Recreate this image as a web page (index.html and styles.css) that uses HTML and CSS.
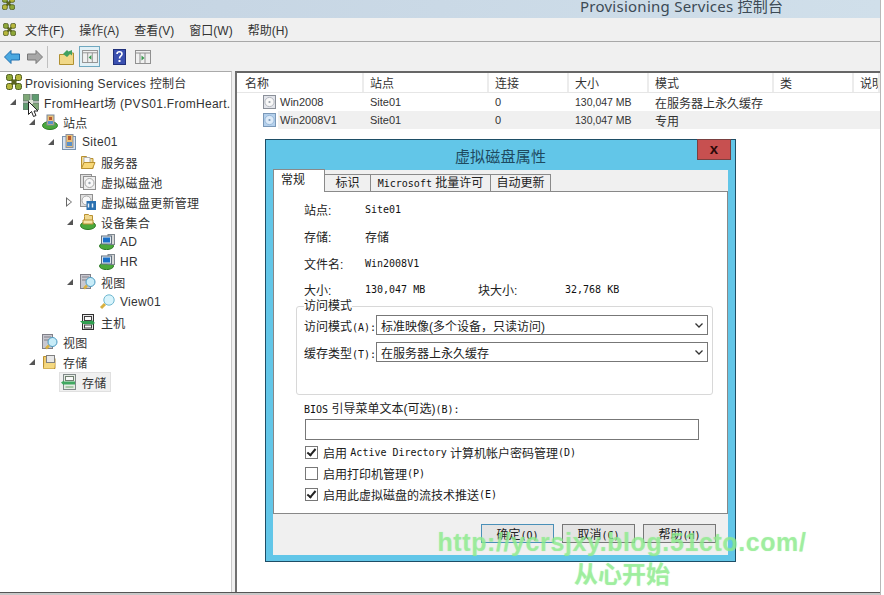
FILE: index.html
```html
<!DOCTYPE html>
<html lang="zh-CN">
<head>
    <meta charset="UTF-8">
    <title>Provisioning Services 控制台</title>
    <link rel="stylesheet" href="styles.css">
</head>
<body>
<svg class="defs" width="0" height="0">
    <defs>
        <symbol id="logo" viewBox="0 0 16 16">
            <path d="M4 4l8 8M12 4l-8 8" stroke="#5a6420" stroke-width="3"/>
            <rect x="0.500" y="0.500" width="6" height="6" rx="2" fill="#8fa838" stroke="#4d5a20"/>
            <rect x="9.500" y="0.500" width="6" height="6" rx="2" fill="#b8b83c" stroke="#4d5a20"/>
            <rect x="0.500" y="9.500" width="6" height="6" rx="2" fill="#b8b83c" stroke="#4d5a20"/>
            <rect x="9.500" y="9.500" width="6" height="6" rx="2" fill="#8fa838" stroke="#4d5a20"/>
        </symbol>
        <symbol id="farm" viewBox="0 0 16 16">
            <rect x="0" y="0" width="7" height="7" fill="#7fa878" stroke="#6b7b70"/>
            <rect x="9" y="0" width="7" height="7" fill="#5f9c70" stroke="#6b7b70"/>
            <rect x="0" y="9" width="7" height="7" fill="#5f9c70" stroke="#6b7b70"/>
            <rect x="9" y="9" width="7" height="7" fill="#7fa878" stroke="#6b7b70"/>
            <path d="M6 6h4v4H6z" fill="#dfe8d8"/>
        </symbol>
        <symbol id="sites" viewBox="0 0 16 16">
            <ellipse cx="8" cy="11.500" rx="7.500" ry="4" fill="#4aa83c" stroke="#2c7a26"/>
            <rect x="5" y="1" width="7" height="10" fill="#e8c078" stroke="#7a8aa0"/>
            <path d="M7 3h3v3H7z" fill="#b85a30"/>
            <path d="M6 7h5v3H6z" fill="#5a90c8"/>
        </symbol>
        <symbol id="site" viewBox="0 0 16 16">
            <rect x="1.500" y="2.500" width="13" height="13" fill="#d8e4f0" stroke="#7a94b0"/>
            <rect x="5" y="0.500" width="7" height="13" fill="#e8c078" stroke="#8a90a0"/>
            <path d="M7 2h3v4H7z" fill="#b85a30"/>
            <path d="M6 8h5v4H6z" fill="#5a90c8"/>
        </symbol>
        <symbol id="folder" viewBox="0 0 16 16">
            <path d="M1.500 14.500v-12h5l1.500 2h5v10z" fill="#f4dc90" stroke="#b89030"/>
            <path d="M4 3.500h6v5H4z" fill="#f8f8f8" stroke="#b0b0b0"/>
            <path d="M1.500 14.500l2.500-6h11l-2.500 6z" fill="#f8d878" stroke="#b89030"/>
        </symbol>
        <symbol id="store" viewBox="0 0 16 16">
            <path d="M1.500 14.500v-12h5l1.500 2h5v10z" fill="#f0cc70" stroke="#b89030"/>
            <rect x="4.500" y="1.500" width="8" height="7" fill="#e8e8e8" stroke="#808080"/>
            <path d="M3 9h10l-1 5.500H1.500z" fill="#f4d880"/>
        </symbol>
        <symbol id="pool" viewBox="0 0 16 16">
            <rect x="0.500" y="0.500" width="11" height="13" fill="#e0e0e0" stroke="#909090"/>
            <rect x="3.500" y="2.500" width="12" height="13" fill="#eeeeee" stroke="#909090"/>
            <circle cx="9.500" cy="9" r="4.500" fill="#f8f8f8" stroke="#a8a8a8"/>
            <circle cx="9.500" cy="9" r="1.200" fill="#a0a8b0"/>
        </symbol>
        <symbol id="update" viewBox="0 0 16 16">
            <rect x="0.500" y="0.500" width="12" height="12" fill="#e0e0e0" stroke="#909090"/>
            <circle cx="6.500" cy="6.500" r="4.500" fill="#f8f8f8" stroke="#a8a8a8"/>
            <rect x="6.500" y="7" width="9.500" height="9" fill="#2a70b0"/>
            <path d="M8.500 9.500v4M12.500 9.500v4" stroke="#e8f0f8" stroke-width="1.500"/>
        </symbol>
        <symbol id="devices" viewBox="0 0 16 16">
            <ellipse cx="8" cy="11.500" rx="7.500" ry="4" fill="#4aa83c" stroke="#2c7a26"/>
            <path d="M4.500 2.500v-2h4l1 1h3v8h-8z" fill="#f0d890" stroke="#b89030"/>
            <path d="M3 6h10v4H3z" fill="#f4e4a8" stroke="#b89030"/>
        </symbol>
        <symbol id="device" viewBox="0 0 16 16">
            <ellipse cx="7.500" cy="12" rx="7" ry="3.600" fill="#4aa83c" stroke="#2c7a26"/>
            <rect x="9" y="0.500" width="6.500" height="10" fill="#d8d8d8" stroke="#808890"/>
            <rect x="2.500" y="2" width="10" height="8" fill="#e0e8f0" stroke="#607080"/>
            <rect x="4" y="3.500" width="7" height="5" fill="#1a70c8"/>
        </symbol>
        <symbol id="view" viewBox="0 0 16 16">
            <rect x="0.500" y="0.500" width="10" height="14" fill="#c8c8d0" stroke="#808088"/>
            <path d="M2 3h7M2 6h5" stroke="#808088"/>
            <circle cx="10.500" cy="8" r="4.500" fill="#c8ecf8" stroke="#4898c0"/>
            <path d="M7 11.500l-3 3" stroke="#d8b040" stroke-width="2.500"/>
        </symbol>
        <symbol id="lens" viewBox="0 0 16 16">
            <circle cx="10" cy="6" r="5.200" fill="#d8f4fc" stroke="#70b8d0"/>
            <path d="M6 10l-4 4" stroke="#d8b040" stroke-width="3"/>
        </symbol>
        <symbol id="host" viewBox="0 0 16 16">
            <rect x="2.500" y="0.500" width="11" height="15" fill="#e8e8e8" stroke="#303030"/>
            <rect x="4.500" y="2.500" width="7" height="4" fill="#f8f8f8" stroke="#404040"/>
            <rect x="4.500" y="11" width="7" height="3" fill="#f8f8f8" stroke="#404040"/>
            <path d="M0 7h11l1-1 3 3-3 2-1-1H3z" fill="#30a050"/>
        </symbol>
        <symbol id="storage" viewBox="0 0 16 16">
            <rect x="2.500" y="0.500" width="12" height="15" fill="#e4ece4" stroke="#808888"/>
            <rect x="4.500" y="2.500" width="8" height="4" fill="#f8f8f8" stroke="#708070"/>
            <path d="M0 8.500l3-2v1h11v3H3v1z" fill="#40a860"/>
            <rect x="4.500" y="12" width="8" height="2" fill="#a8c8a8"/>
        </symbol>
        <symbol id="disk" viewBox="0 0 13 14">
            <rect x="0.500" y="0.500" width="12" height="13" fill="#e2e4ea" stroke="#8a8f98"/>
            <circle cx="6.500" cy="7" r="4.600" fill="#f8f8f8" stroke="#b4b8c0"/>
            <circle cx="6.500" cy="7" r="1.100" fill="#98a0a8"/>
        </symbol>
        <symbol id="disk-sel" viewBox="0 0 13 14">
            <rect x="0.500" y="0.500" width="12" height="13" fill="#b4d0ec" stroke="#7a98b8"/>
            <circle cx="6.500" cy="7" r="4.600" fill="#dceaf8" stroke="#98b8d8"/>
            <circle cx="6.500" cy="7" r="1.100" fill="#7a98b8"/>
        </symbol>
    </defs>
</svg>

<div class="console">
    <header class="titlebar">
        <svg class="title-logo"><use href="#logo"/></svg>
        <span>Provisioning Services 控制台</span>
    </header>

    <nav class="menubar">
        <svg class="menu-logo"><use href="#logo"/></svg>
        <span>文件(F)</span>
        <span>操作(A)</span>
        <span>查看(V)</span>
        <span>窗口(W)</span>
        <span>帮助(H)</span>
    </nav>

    <div class="toolbar">
        <svg class="tool tool-back" viewBox="0 0 16 14"><path d="M0.500 7L7 0.500V4h8.500v6H7v3.500z" fill="#4aa8e0" stroke="#2070b0"/></svg>
        <svg class="tool tool-next" viewBox="0 0 16 14"><path d="M15.500 7L9 0.500V4H0.500v6H9v3.500z" fill="#a8a8a8" stroke="#787878"/></svg>
        <i class="tool-sep"></i>
        <svg class="tool tool-up" viewBox="0 0 15 16"><path d="M0.500 15.500v-10h5l1-1.500h8v11.500z" fill="#f0d888" stroke="#b09030"/><path d="M4 5l4-4 1.500 1.500L13 1v5.500L11 5 8 8z" fill="#40a060"/></svg>
        <div class="tool-active">
            <svg viewBox="0 0 17 14"><rect x="0.500" y="0.500" width="16" height="13" fill="#f0f0f0" stroke="#909090"/><path d="M0.500 3h16M6 3v11M11 3v11" stroke="#909090"/><path d="M10 5.500v5l-3-2.500z" fill="#3a9a50"/></svg>
        </div>
        <svg class="tool tool-help" viewBox="0 0 13 16"><rect x="0.500" y="0.500" width="12" height="15" fill="#3a50b0" stroke="#20307a"/><path d="M4 5c0-3 5-3 5 0 0 2-2.500 2-2.500 4.500" fill="none" stroke="#fff" stroke-width="1.600"/><rect x="5.500" y="11" width="2" height="2" fill="#fff"/></svg>
        <svg class="tool tool-pane" viewBox="0 0 16 14"><rect x="0.500" y="0.500" width="15" height="13" fill="#f0f0f0" stroke="#909090"/><path d="M0.500 3h15M5 3v11M10 3v11" stroke="#909090"/><path d="M6.500 5.500v5l3-2.500z" fill="#3a9a50"/></svg>
    </div>

    <div class="panes">
        <aside class="tree">
            <div class="node lv0"><svg class="ico"><use href="#logo"/></svg>Provisioning Services 控制台</div>
            <div class="node lv1"><i class="open"></i><svg class="ico"><use href="#farm"/></svg>FromHeart场 (PVS01.FromHeart.</div>
            <div class="node lv2"><i class="open"></i><svg class="ico"><use href="#sites"/></svg>站点</div>
            <div class="node lv3"><i class="open"></i><svg class="ico"><use href="#site"/></svg>Site01</div>
            <div class="node lv4"><svg class="ico"><use href="#folder"/></svg>服务器</div>
            <div class="node lv4"><svg class="ico"><use href="#pool"/></svg>虚拟磁盘池</div>
            <div class="node lv4"><i class="shut"></i><svg class="ico"><use href="#update"/></svg>虚拟磁盘更新管理</div>
            <div class="node lv4"><i class="open"></i><svg class="ico"><use href="#devices"/></svg>设备集合</div>
            <div class="node lv5"><svg class="ico"><use href="#device"/></svg>AD</div>
            <div class="node lv5"><svg class="ico"><use href="#device"/></svg>HR</div>
            <div class="node lv4"><i class="open"></i><svg class="ico"><use href="#view"/></svg>视图</div>
            <div class="node lv5"><svg class="ico"><use href="#lens"/></svg>View01</div>
            <div class="node lv4"><svg class="ico"><use href="#host"/></svg>主机</div>
            <div class="node lv2"><svg class="ico"><use href="#view"/></svg>视图</div>
            <div class="node lv2"><i class="open"></i><svg class="ico"><use href="#store"/></svg>存储</div>
            <div class="node lv3"><span class="node-sel"><svg class="ico"><use href="#storage"/></svg>存储</span></div>
        </aside>

        <section class="list">
            <div class="list-head">
                <div class="col-name">名称</div><div>站点</div><div>连接</div><div>大小</div><div>模式</div><div>类</div><div>说明</div>
            </div>
            <div class="list-row">
                <div class="disk-cell"><svg class="disk"><use href="#disk"/></svg><span>Win2008</span></div>
                <div>Site01</div><div>0</div><div class="size">130,047 MB</div><div class="mode">在服务器上永久缓存</div><div></div><div></div>
            </div>
            <div class="list-row sel">
                <div class="disk-cell"><svg class="disk"><use href="#disk-sel"/></svg><span>Win2008V1</span></div>
                <div>Site01</div><div>0</div><div class="size">130,047 MB</div><div class="mode">专用</div><div></div><div></div>
            </div>
        </section>
    </div>
</div>

<div class="dialog">
    <div class="dlg-title">
        <span>虚拟磁盘属性</span>
        <button class="dlg-close">x</button>
    </div>
    <div class="tabs">
        <div class="tab tab-on">常规</div>
        <div class="tab tab-id">标识</div>
        <div class="tab tab-ms"><span class="en">Microsoft</span> 批量许可</div>
        <div class="tab tab-up">自动更新</div>
    </div>
    <div class="tab-body">
        <div class="field"><label>站点:</label><span class="en">Site01</span></div>
        <div class="field"><label>存储:</label><span>存储</span></div>
        <div class="field"><label>文件名:</label><span class="en">Win2008V1</span></div>
        <div class="field field-size">
            <label>大小:</label><span class="en val-size">130,047 MB</span>
            <label class="lbl-block">块大小:</label><span class="en">32,768 KB</span>
        </div>

        <fieldset class="group">
            <legend>访问模式</legend>
            <div class="combo-row">
                <label>访问模式<span class="en">(A):</span></label>
                <div class="combo">标准映像(多个设备，只读访问)<svg viewBox="0 0 8 5"><path d="M0.500 0.500L4 4l3.500-3.500" fill="none" stroke="#333" stroke-width="1.300"/></svg></div>
            </div>
            <div class="combo-row">
                <label>缓存类型<span class="en">(T):</span></label>
                <div class="combo">在服务器上永久缓存<svg viewBox="0 0 8 5"><path d="M0.500 0.500L4 4l3.500-3.500" fill="none" stroke="#333" stroke-width="1.300"/></svg></div>
            </div>
        </fieldset>

        <div class="bios-label"><span class="en">BIOS</span> 引导菜单文本(可选)<span class="en">(B):</span></div>
        <div class="bios-input"></div>

        <div class="check"><i class="box on"></i>启用 <span class="en">Active Directory</span> 计算机帐户密码管理<span class="en">(D)</span></div>
        <div class="check"><i class="box"></i>启用打印机管理<span class="en">(P)</span></div>
        <div class="check"><i class="box on"></i>启用此虚拟磁盘的流技术推送<span class="en">(E)</span></div>
    </div>
    <div class="dlg-foot">
        <button class="btn btn-main">确定<span class="en">(O)</span></button>
        <button class="btn">取消<span class="en">(C)</span></button>
        <button class="btn">帮助<span class="en">(H)</span></button>
    </div>
</div>

<svg class="cursor" viewBox="0 0 10 17"><path d="M0.500 0.500v13l3-3 2 5 2.500-1-2-4.500h4z" fill="#fff" stroke="#222"/></svg>

<div class="watermark">
    <div class="wm-url">http://ycrsjxy.blog.51cto.com/</div>
    <div class="wm-name">从心开始</div>
</div>
</body>
</html>
```

FILE: styles.css
```css
html, body {
    margin: 0;
    padding: 0;
    height: 100%;
    overflow: hidden;
}

body {
    font-family: "Liberation Sans", "Noto Sans CJK SC", sans-serif;
    font-size: 12px;
    color: #333;
    background: #fff;
    position: relative;
}

.defs {
    position: absolute;
}

.console {
    width: 881px;
    height: 595px;
    box-sizing: border-box;
    padding-bottom: 2px;
    border-right: 1px solid #b8b8b8;
    background: #c8c8c8;
    display: flex;
    flex-direction: column;
}

/* barre de titre */
.titlebar {
    height: 18px;
    flex: none;
    display: flex;
    align-items: flex-start;
    overflow: hidden;
    background: linear-gradient(90deg, #c4d3e2, #d0dfea);
    font-family: "Noto Sans", "Noto Sans CJK SC", sans-serif;
    font-size: 15px;
    letter-spacing: 0.25px;
    color: #3c4a55;
}

.titlebar span {
    line-height: 13px;
    margin-left: 565px;
    white-space: nowrap;
}

.title-logo {
    width: 13px;
    height: 13px;
    flex: none;
    margin: -3px 0 0 2px;
}

.menubar {
    height: 23px;
    flex: none;
    display: flex;
    align-items: center;
    gap: 15px;
    background: #f0f0f0;
    border-bottom: 1px solid #a8a8a8;
}

.menu-logo {
    width: 13px;
    height: 13px;
    margin-left: 3px;
    margin-right: -6px;
}

.toolbar {
    height: 29px;
    flex: none;
    display: flex;
    align-items: center;
    background: #f0f0f0;
}

.tool {
    flex: none;
}

.tool-back {
    width: 16px;
    height: 14px;
    margin-left: 4px;
}

.tool-next {
    width: 16px;
    height: 14px;
    margin-left: 7px;
}

.tool-sep {
    width: 1px;
    height: 22px;
    margin-left: 4px;
    background: #c0c0c0;
}

.tool-up {
    width: 15px;
    height: 16px;
    margin-left: 11px;
}

.tool-active {
    width: 21px;
    height: 21px;
    margin-left: 5px;
    box-sizing: border-box;
    border: 1px solid #6fa8c0;
    background: #e2f0f6;
    display: flex;
    align-items: center;
    justify-content: center;
}

.tool-active svg {
    width: 16px;
    height: 13px;
}

.tool-help {
    width: 13px;
    height: 16px;
    margin-left: 13px;
}

.tool-pane {
    width: 16px;
    height: 14px;
    margin-left: 9px;
}

.panes {
    flex: 1;
    display: flex;
    min-height: 0;
    background: #f0f0f0;
    border-bottom: 1px solid #555;
}

/* arbre */
.tree {
    width: 231px;
    flex: none;
    background: #fff;
    border-top: 1px solid #aaa;
    border-right: 1px solid #c8c8c8;
    overflow: hidden;
}

.node {
    height: 20px;
    display: flex;
    align-items: center;
    white-space: nowrap;
    letter-spacing: 0.3px;
}

.node i {
    width: 16px;
    height: 16px;
    margin-left: -16px;
    flex: none;
    position: relative;
}

.open::after {
    content: "";
    position: absolute;
    right: 7px;
    top: 5px;
    border-style: solid;
    border-width: 0 0 6px 6px;
    border-color: transparent transparent #555 transparent;
}

.shut::before,
.shut::after {
    content: "";
    position: absolute;
    border-style: solid;
    border-color: transparent;
}

.shut::before {
    right: 8px;
    top: 3px;
    border-width: 5px 0 5px 6px;
    border-left-color: #666;
}

.shut::after {
    right: 9px;
    top: 5px;
    border-width: 3px 0 3px 4px;
    border-left-color: #fff;
}

.ico {
    width: 16px;
    height: 16px;
    flex: none;
    margin-right: 5px;
}

.lv0 { padding-left: 6px; }
.lv0 .ico { margin-right: 3px; }
.lv1 { padding-left: 23px; }
.lv2 { padding-left: 42px; }
.lv3 { padding-left: 61px; }
.lv4 { padding-left: 80px; }
.lv5 { padding-left: 99px; }

.node-sel {
    display: flex;
    align-items: center;
    height: 18px;
    padding: 0 3px 0 1px;
    background: #f0f0f0;
    border: 1px solid #e0e0e0;
    margin-left: -2px;
}

/* liste */
.list {
    flex: 1;
    margin-left: 3px;
    background: #fff;
    border-top: 2px solid #666;
    border-left: 2px solid #707070;
    overflow: hidden;
}

.list-head,
.list-row {
    display: grid;
    grid-template-columns: 127px 125px 80px 80px 125px 80px 1fr;
    align-items: center;
}

.list-head {
    height: 19px;
    border-bottom: 1px solid #e6e6e6;
    white-space: nowrap;
}

.list-head div {
    padding: 3px 0 0 6px;
    line-height: 16px;
    border-right: 2px solid #ececec;
    overflow: hidden;
}

.list-head .col-name {
    padding-left: 8px;
}

.list-row {
    height: 18px;
    font-size: 11px;
}

.list-row > div {
    padding-left: 6px;
    white-space: nowrap;
    overflow: hidden;
}

.list-row.sel {
    background: linear-gradient(90deg, #fff 0, #fff 41px, #f0f0f0 41px);
}

.list-row > .disk-cell {
    padding-left: 26px;
    display: flex;
    align-items: center;
}

.disk {
    width: 13px;
    height: 14px;
    margin-right: 4px;
    flex: none;
}

.list-row .size {
    font-size: 10.5px;
}

.list-row .mode {
    font-size: 12px;
}

/* fenetre de dialogue */
.dialog {
    position: absolute;
    left: 265px;
    top: 139px;
    width: 471px;
    height: 423px;
    box-sizing: border-box;
    border: 1px solid #1e4e66;
    background: #62c6e8;
    padding: 0 7px 6px;
    display: flex;
    flex-direction: column;
    color: #222;
}

.dlg-title {
    height: 30px;
    flex: none;
    display: flex;
    align-items: center;
    justify-content: center;
    font-size: 15px;
    letter-spacing: 0.2px;
    color: #1e4a60;
    position: relative;
}

.dlg-close {
    position: absolute;
    right: -3px;
    top: -1px;
    width: 34px;
    height: 21px;
    padding: 0 0 3px;
    box-sizing: border-box;
    border: 1px solid #7a4040;
    background: #c75050;
    color: #2a0808;
    font: bold 15px "Liberation Sans", sans-serif;
}

.tabs {
    height: 21px;
    flex: none;
    display: flex;
    align-items: flex-end;
    background: #f0f0f0;
    border-bottom: 1px solid #888;
    position: relative;
}

.tab {
    height: 18px;
    box-sizing: border-box;
    margin-bottom: -1px;
    border: 1px solid #8a8a8a;
    border-left-width: 0;
    background: #f0f0f0;
    line-height: 17px;
    text-align: center;
    white-space: nowrap;
}

.tab-on {
    width: 52px;
    height: 23px;
    border-left-width: 1px;
    border-bottom: 0;
    background: #fff;
    line-height: 21px;
    padding-right: 12px;
    position: relative;
    z-index: 1;
}

.tab-id { width: 46px; }
.tab-ms { width: 120px; }
.tab-up { width: 60px; }

.en {
    font-family: "DejaVu Sans Mono", monospace;
    font-size: 10px;
    color: #111;
}

.tab-body {
    flex: 1;
    background: #fff;
    border-left: 1px solid #888;
    border-right: 1px solid #888;
    padding: 4px 15px 0 30px;
    min-height: 0;
}

.field {
    height: 27px;
    display: flex;
    align-items: center;
}

.field-size {
    height: 24px;
}

.field label {
    width: 61px;
    flex: none;
}

.field .val-size {
    width: 113px;
    flex: none;
}

.field .lbl-block {
    width: 87px;
}

.group {
    margin: -2px 0 0 -8px;
    padding: 0 4px 0 7px;
    width: 417px;
    height: 96px;
    box-sizing: border-box;
    border: 1px solid #d8d8d8;
    border-radius: 3px;
}

.group legend {
    padding: 0;
    line-height: 14px;
    background: #fff;
}

.combo-row {
    height: 20px;
    margin-bottom: 7px;
    display: flex;
    align-items: center;
}

.combo-row:first-of-type {
    margin-top: 2px;
}

.combo-row label {
    width: 72px;
    flex: none;
    white-space: nowrap;
}

.combo {
    flex: 1;
    height: 20px;
    box-sizing: border-box;
    border: 1px solid #777;
    padding: 0 4px;
    display: flex;
    align-items: center;
    justify-content: space-between;
}

.combo svg {
    width: 8px;
    height: 5px;
}

.bios-label {
    margin-top: 6px;
    height: 17px;
    line-height: 17px;
}

.bios-input {
    width: 394px;
    height: 21px;
    margin: 1px 0 2px 1px;
    box-sizing: border-box;
    border: 1px solid #777;
}

.check {
    height: 21px;
    margin-left: 1px;
    display: flex;
    align-items: center;
    white-space: pre;
}

.box {
    width: 13px;
    height: 13px;
    box-sizing: border-box;
    border: 1px solid #777;
    margin-right: 5px;
    flex: none;
    position: relative;
}

.box.on::after {
    content: "";
    position: absolute;
    left: 3px;
    top: 0;
    width: 3px;
    height: 7px;
    border: solid #222;
    border-width: 0 2px 2px 0;
    transform: rotate(40deg);
}

.dlg-foot {
    height: 42px;
    flex: none;
    box-sizing: border-box;
    background: #f0f0f0;
    border-top: 1px solid #888;
    padding: 10px 12px 0 0;
    display: flex;
    justify-content: flex-end;
    gap: 8px;
}

.btn {
    width: 73px;
    height: 19px;
    padding: 0;
    box-sizing: border-box;
    border: 1px solid #777;
    background: #e4e4e4;
    font: 12px "Liberation Sans", "Noto Sans CJK SC", sans-serif;
    color: #222;
}

.btn-main {
    border-color: #4a90b8;
}

/* curseur et filigrane par dessus la page */
.cursor {
    position: absolute;
    left: 28px;
    top: 101px;
    width: 10px;
    height: 17px;
}

.watermark {
    position: absolute;
    left: 437px;
    top: 527px;
    width: 370px;
    text-align: center;
    color: rgba(140, 235, 140, 0.6);
    font-weight: bold;
    text-shadow: 0 0 1px rgba(140, 235, 140, 0.6);
    pointer-events: none;
}

.wm-url {
    font-family: "Liberation Sans", sans-serif;
    font-size: 25px;
    line-height: 30px;
    white-space: nowrap;
    letter-spacing: 0.6px;
}

.wm-name {
    font-family: "Noto Sans CJK SC", sans-serif;
    font-size: 24px;
    line-height: 32px;
}
```
